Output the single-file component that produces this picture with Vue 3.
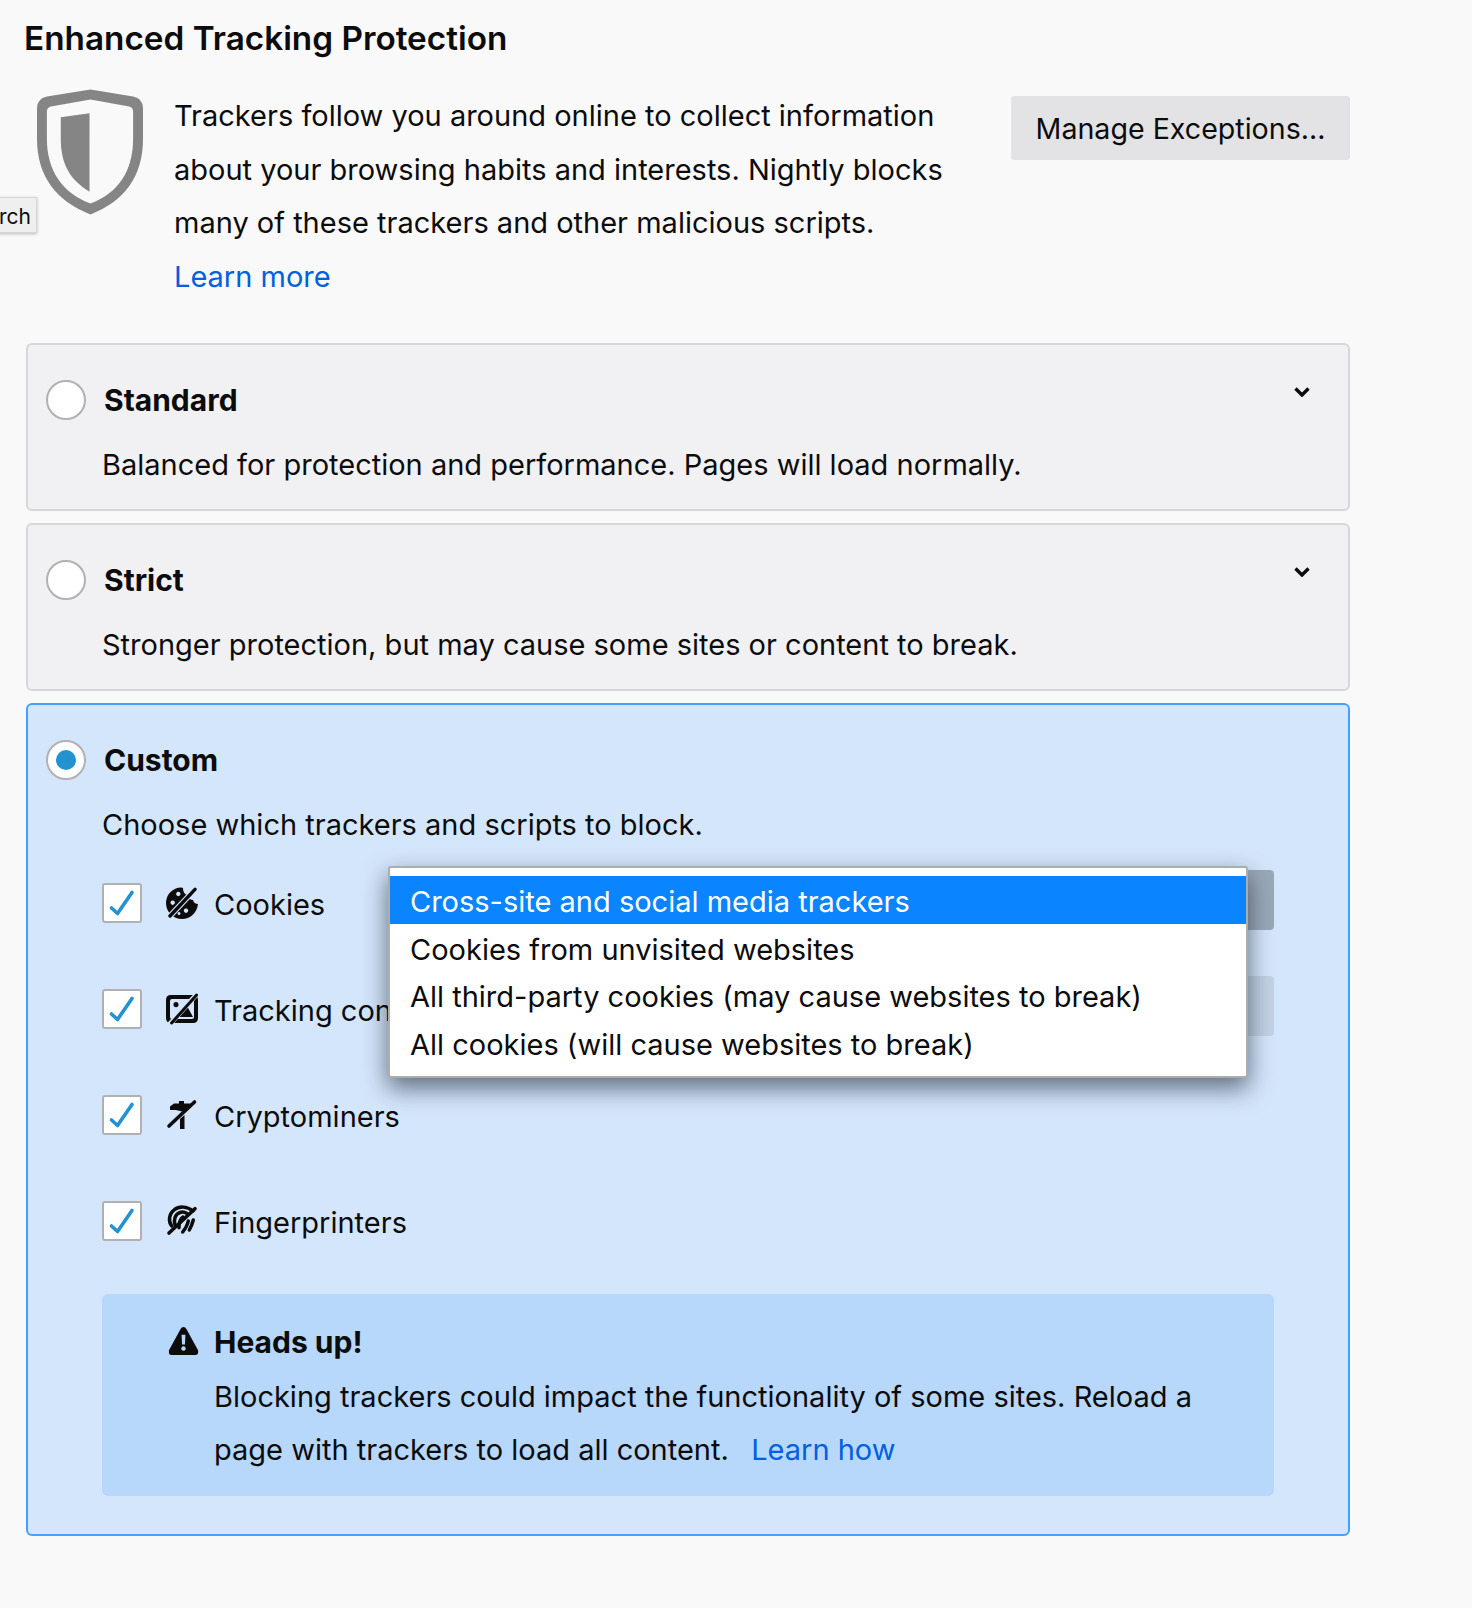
<script setup>
const rows = [
  { label: 'Cookies', icon: 'cookie', select: 'dark' },
  { label: 'Tracking content', icon: 'image', select: 'light' },
  { label: 'Cryptominers', icon: 'miner' },
  { label: 'Fingerprinters', icon: 'finger' }
]
const options = [
  'Cross-site and social media trackers',
  'Cookies from unvisited websites',
  'All third-party cookies (may cause websites to break)',
  'All cookies (will cause websites to break)'
]
</script>

<template>
  <div class="page">
    <h1 class="title">Enhanced Tracking Protection</h1>
    <div class="intro">
      <svg class="shield" viewBox="0 0 108 126">
        <path fill="#858585" fill-rule="evenodd" d="M54 0 L97 7 Q107 9 107 19 L107 50 C107 88 88 113 54 126 C20 113 0 88 0 50 L0 19 Q0 9 10 7 Z M54 10 L14 17 Q10 18 10 22 L10 50 C10 82 26 105 54 115 C82 105 97 82 97 50 L97 22 Q97 18 93 17 Z" />
        <path fill="#858585" d="M53 24 L53 103 C34 92 24 76 24 50 L24 28 Z" />
      </svg>
      <div class="intro-text">
        <p>Trackers follow you around online to collect information<br>about your browsing habits and interests. Nightly blocks<br>many of these trackers and other malicious scripts.</p>
        <a class="link">Learn more</a>
      </div>
      <div class="manage">Manage Exceptions...</div>
    </div>
    <div class="tip">rch</div>

    <section class="card">
      <div class="head">
        <span class="radio"></span><b>Standard</b>
        <svg class="chev" viewBox="0 0 16 10"><path d="M1.500 1.500 L8 8 L14.500 1.500" fill="none" stroke="#0c0c0d" stroke-width="3.400" /></svg>
      </div>
      <p class="desc">Balanced for protection and performance. Pages will load normally.</p>
    </section>

    <section class="card">
      <div class="head">
        <span class="radio"></span><b>Strict</b>
        <svg class="chev" viewBox="0 0 16 10"><path d="M1.500 1.500 L8 8 L14.500 1.500" fill="none" stroke="#0c0c0d" stroke-width="3.400" /></svg>
      </div>
      <p class="desc">Stronger protection, but may cause some sites or content to break.</p>
    </section>

    <section class="card custom">
      <div class="head">
        <span class="radio on"></span><b>Custom</b>
      </div>
      <p class="desc">Choose which trackers and scripts to block.</p>

      <div class="rows">
        <div v-for="r in rows" :key="r.label" class="row">
          <span class="check">
            <svg viewBox="0 0 36 36"><path d="M7.500 23 L13.500 28.500 L28 7.500" fill="none" stroke="#2292d0" stroke-width="3.600" stroke-linecap="round" stroke-linejoin="round" /></svg>
          </span>
          <svg class="ico" viewBox="0 0 32 32">
            <template v-if="r.icon === 'cookie'">
              <path fill="#0c0c0d" fill-rule="evenodd" d="M15 0.500 C7 0.500 0 7.500 0 16 C0 25 7 32 16 32 C24 32 31 26 32 17 C29.500 17 27.500 15.500 27 13 C24.500 13 22.500 11 22 8 C19 8 17 5 17 1 Z M12.300 4.800 a2.200 2.200 0 1 0 .01 0 Z M6.700 13.500 a2.200 2.200 0 1 0 .01 0 Z M20 21.500 a2.200 2.200 0 1 0 .01 0 Z M13 25 a1.500 1.500 0 1 0 .01 0 Z" />
              <path d="M4 29 L29 2.300" stroke="#d3e6fb" stroke-width="5.600" />
              <path d="M4 29 L29 2.300" stroke="#0c0c0d" stroke-width="3.400" stroke-linecap="round" />
            </template>
            <template v-else-if="r.icon === 'image'">
              <path fill="#0c0c0d" fill-rule="evenodd" d="M5 2 H27 Q32 2 32 7 V25 Q32 30 27 30 H5 Q0 30 0 25 V7 Q0 2 5 2 Z M6 6 Q4 6 4 8 V24 Q4 26 6 26 H26 Q28 26 28 24 V8 Q28 6 26 6 Z" />
              <path fill="#0c0c0d" d="M10 9 a2.600 2.600 0 1 1 -.01 0 Z M12 24 L21 13 L27 24 Z" />
              <path d="M3 32 L31 1" stroke="#d3e6fb" stroke-width="5" />
              <path d="M5.600 30 L30.600 2" stroke="#0c0c0d" stroke-width="3" stroke-linecap="round" />
            </template>
            <template v-else-if="r.icon === 'miner'">
              <path fill="#0c0c0d" d="M4 7.500 L8 4.500 L13 4.500 L13 2 L18 2 L18 4.500 L27 4.500 L18 13 L10 11 L4 11 Z M14 20 L18.500 16 L18.500 30 L14 30 Z" />
              <path d="M3 27 L28.500 3" stroke="#0c0c0d" stroke-width="3.600" stroke-linecap="round" />
            </template>
            <template v-else>
              <g fill="none" stroke="#0c0c0d" stroke-width="3.500" stroke-linecap="round">
                <path d="M5.700 21 C2 16 3 9 8 5 C13 1 21 1 27 6" />
                <path d="M9 20 C7.500 15 9 9 14 7.500 C16 6.800 18.500 7 21 8.500" />
                <path d="M13 22.700 C13 18 14 14 17 12" />
                <path d="M16.700 27 C19 24 21.500 20 22.300 16" />
                <path d="M23.300 25 C25 22 26.500 18 27.300 15" />
                <path d="M3 28 L29 3.700" stroke-width="3.600" />
              </g>
            </template>
          </svg>
          <span class="label">{{ r.label }}</span>
          <span v-if="r.select" class="select" :class="r.select"></span>
        </div>

        <ul class="menu">
          <li v-for="(o, i) in options" :key="o" :class="{ sel: i === 0 }">{{ o }}</li>
        </ul>
      </div>

      <div class="warn">
        <div class="warn-head">
          <svg class="ico" viewBox="0 0 32 32"><path fill="#0c0c0d" fill-rule="evenodd" d="M16 2 Q18 2 19 4 L31 26 Q32 31 28 31 H4 Q0 31 1 26 L13 4 Q14 2 16 2 Z M14 10 L14.500 20 H17.500 L18 10 Z M16 22 a2.300 2.300 0 1 0 .01 0 Z" /></svg>
          <b>Heads up!</b>
        </div>
        <p class="warn-text">Blocking trackers could impact the functionality of some sites. Reload a<br>page with trackers to load all content.&nbsp; <a class="link how">Learn how</a></p>
      </div>
    </section>
  </div>
</template>

<style>
html, body { margin: 0; background: #f9f9fa; }
</style>

<style scoped>
.page {
  position: relative;
  box-sizing: border-box;
  width: 1472px;
  height: 1608px;
  padding: 0 122px 0 26px;
  background: #f9f9fa;
  color: #0c0c0d;
  font-family: Inter, "Liberation Sans", sans-serif;
  font-size: 29px;
  line-height: 53.700px;
}
p { margin: 0; }
b { font-weight: 700; font-size: 30px; }
.title {
  margin: 0 0 0 -2px;
  padding-top: 12px;
  font-size: 33.300px;
  line-height: 52px;
  font-weight: 600;
}
.intro {
  display: flex;
  align-items: flex-start;
  height: 279px;
  padding-top: 25px;
  box-sizing: border-box;
}
.shield { width: 107px; height: 126px; margin: 0 0 0 11px; flex: none; }
.intro-text { margin-left: 30px; width: 840px; flex: none; }
.link { color: #0060df; display: inline; }
.how { margin-left: 6px; }
.manage {
  margin-left: -3px;
  margin-top: 7px;
  flex: none;
  width: 339px;
  height: 64px;
  background: #e3e3e5;
  border-radius: 3px;
  text-align: center;
  line-height: 65px;
  font-size: 28.600px;
}
.tip {
  position: absolute;
  left: -2px;
  top: 197px;
  width: 39px;
  height: 36px;
  box-sizing: border-box;
  border: 1px solid #d7d7d7;
  background: #efefef;
  box-shadow: 0 1px 3px rgba(0, 0, 0, .25);
  font-size: 21px;
  line-height: 37px;
  text-align: right;
  padding-right: 7px;
  overflow: hidden;
}
.card {
  position: relative;
  box-sizing: border-box;
  height: 168px;
  margin-bottom: 12px;
  padding: 29px 0 0 74px;
  background: #f1f1f3;
  border: 2px solid #d7d7db;
  border-radius: 6px;
}
.custom {
  height: 833px;
  margin: 0;
  background: #d4e6fb;
  border-color: #45a1ff;
}
.head { display: flex; align-items: center; height: 54px; }
.head b { margin-left: 2px; }
.radio {
  position: absolute;
  left: 18px;
  top: 35px;
  width: 40px;
  height: 40px;
  box-sizing: border-box;
  border: 2px solid #b1b1b3;
  border-radius: 50%;
  background: #fff;
}
.radio.on::after {
  content: "";
  position: absolute;
  left: 8px;
  top: 8px;
  width: 20px;
  height: 20px;
  border-radius: 50%;
  background: #2292d0;
}
.chev { position: absolute; left: 1266px; top: 42px; width: 16px; height: 10px; }
.desc { margin-top: 10px; }
.rows { position: relative; margin-top: 18px; width: 1172px; }
.row { display: flex; align-items: center; height: 60px; margin-bottom: 46px; }
.check {
  flex: none;
  width: 40px;
  height: 40px;
  box-sizing: border-box;
  border: 2px solid #b1b1b3;
  border-radius: 3px;
  background: #fff;
  margin-top: 6px;
}
.check svg { display: block; width: 36px; height: 36px; }
.ico { flex: none; width: 32px; height: 32px; margin-left: 24px; }
.row .ico { margin-top: 6px; }
.label { margin-left: 16px; margin-top: 10px; }
.select {
  position: absolute;
  right: 0;
  width: 885px;
  height: 60px;
  border-radius: 4px;
}
.select.dark { background: #9aa9b8; }
.select.light { background: #c3d3e5; }
.menu {
  position: absolute;
  left: 286px;
  top: -4px;
  width: 860px;
  height: 212px;
  box-sizing: border-box;
  margin: 0;
  padding: 8px 0 0;
  list-style: none;
  background: #fff;
  border: 2px solid #adadad;
  border-radius: 3px;
  box-shadow: 0 10px 24px rgba(15, 25, 40, .6);
}
.menu li { height: 47.800px; line-height: 51px; padding-left: 20px; }
.menu li.sel { background: #0a84ff; color: #fff; }
.warn {
  box-sizing: border-box;
  width: 1172px;
  height: 202px;
  padding: 22px 0 0 112px;
  background: #b7d7fb;
  border-radius: 6px;
  position: relative;
}
.warn-head { display: flex; align-items: center; height: 54px; }
.warn-head .ico { position: absolute; left: 66px; top: 31px; width: 31px; height: 31px; margin: 0; }
</style>
